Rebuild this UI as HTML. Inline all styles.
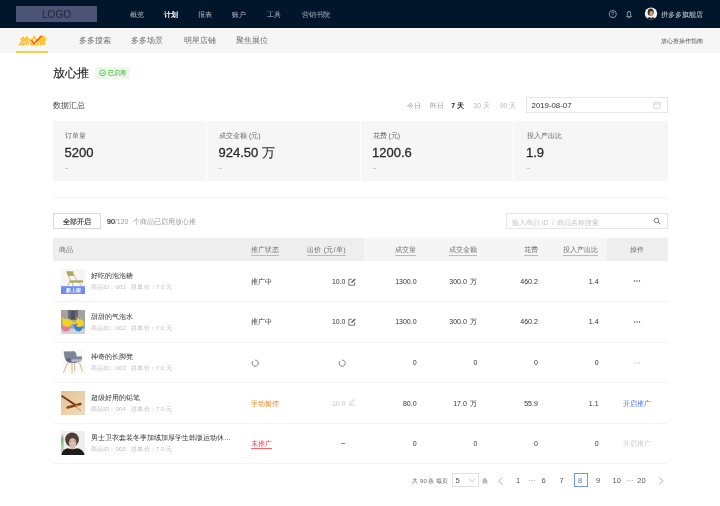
<!DOCTYPE html>
<html><head><meta charset="utf-8">
<style>
*{margin:0;padding:0;box-sizing:border-box}
html,body{width:720px;height:506px;overflow:hidden;background:#fff;font-family:"Liberation Sans",sans-serif;color:#333}
.a{position:absolute;white-space:nowrap;line-height:1}
#top{position:absolute;left:0;top:0;width:720px;height:27.8px;background:#01162b}
#logo{position:absolute;left:16px;top:6px;width:81px;height:16px;background:#4b5573;color:#1a2440;font-size:10px;text-align:center;line-height:18px}
.nav{font-size:7px;color:#b0b5be;top:11px}
#sub{position:absolute;left:0;top:27.8px;width:720px;height:25px;background:#f6f6f6;border-top:1px solid #fbfbfb}
.sn{font-size:7.5px;color:#6e6e6e;top:36.5px}
.t7{font-size:7px}
.g{color:#999}
.big{font-size:13px;color:#2b2b2b;-webkit-text-stroke:0.3px #2b2b2b}
.dash{width:3px;height:0.8px;background:#ccc}
.th{font-size:7px;color:#707070;top:246px}
.u{border-bottom:0.6px solid #bbb;padding-bottom:1.5px}
.pgn{font-size:7.5px;color:#555;top:477px}
</style></head><body><div style="position:absolute;left:0;top:0;width:720px;height:506px;will-change:transform">
<div id="top"></div>
<div id="logo">LOGO</div>
<div class="a nav" style="left:129.5px">概览</div>
<div class="a nav" style="left:164px;color:#fff;font-weight:bold">计划</div>
<div class="a nav" style="left:198px">报表</div>
<div class="a nav" style="left:232px">账户</div>
<div class="a nav" style="left:267px">工具</div>
<div class="a nav" style="left:302px">营销书院</div>
<div class="a nav" style="left:661px;color:#d0d4da">拼多多旗舰店</div>

<div id="sub"></div>
<div class="a sn" style="left:79px">多多搜索</div>
<div class="a sn" style="left:131px">多多场景</div>
<div class="a sn" style="left:184px">明星店铺</div>
<div class="a sn" style="left:236px">聚焦展位</div>
<div class="a" style="left:661px;top:37.5px;font-size:6px;color:#555">放心推操作指南</div>
<div class="a" style="left:16px;top:51px;width:31.5px;height:2px;background:#ffcb45"></div>

<div class="a" style="left:53px;top:67px;font-size:12px;color:#2a2a2a;-webkit-text-stroke:0.18px #2a2a2a">放心推</div>
<div class="a" style="left:95px;top:66.7px;width:35.3px;height:12px;background:#ecf9e7"></div>
<div class="a" style="left:108.3px;top:69.7px;font-size:6px;color:#36b836;-webkit-text-stroke:0.05px #36b836">已启用</div>

<div class="a" style="left:53px;top:101.5px;font-size:8px;color:#444">数据汇总</div>
<div class="a t7 g" style="left:407px;top:101.5px">今日</div>
<div class="a t7 g" style="left:429.7px;top:101.5px">昨日</div>
<div class="a t7" style="left:451.3px;top:101.5px;font-weight:bold;color:#222">7 天</div>
<div class="a t7" style="left:473.3px;top:101.5px;color:#bbb">30 天</div>
<div class="a t7" style="left:499.7px;top:101.5px;color:#bbb">90 天</div>
<div class="a" style="left:526px;top:97.3px;width:141.6px;height:16px;border:0.8px solid #e6e6e6"></div>
<div class="a" style="left:531.6px;top:101.8px;font-size:7.8px;color:#333">2019-08-07</div>

<div class="a" style="left:52.5px;top:121px;width:615px;height:60px;background:#f6f6f6"></div>

<div class="a" style="left:52.5px;top:238px;width:615px;height:22.5px;background:#eee"></div>

<div class="a" style="left:205.5px;top:121px;width:1px;height:60px;background:#fff"></div>
<div class="a" style="left:359.8px;top:121px;width:1px;height:60px;background:#fff"></div>
<div class="a" style="left:513.3px;top:121px;width:1px;height:60px;background:#fff"></div>
<div class="a t7" style="left:65px;top:131.8px;color:#666">订单量</div>
<div class="a t7" style="left:219px;top:131.8px;color:#666">成交金额 (元)</div>
<div class="a t7" style="left:372.5px;top:131.8px;color:#666">花费 (元)</div>
<div class="a t7" style="left:526.5px;top:131.8px;color:#666">投入产出比</div>
<div class="a big" style="left:64.5px;top:146px">5200</div>
<div class="a big" style="left:218.5px;top:146px">924.50 <span style="-webkit-text-stroke:0.1px #2b2b2b">万</span></div>
<div class="a big" style="left:372px;top:146px">1200.6</div>
<div class="a big" style="left:526px;top:146px">1.9</div>
<div class="a dash" style="left:65px;top:168px"></div>
<div class="a dash" style="left:219px;top:168px"></div>
<div class="a dash" style="left:372.5px;top:168px"></div>
<div class="a dash" style="left:526.5px;top:168px"></div>

<div class="a" style="left:52.5px;top:213.2px;width:48.3px;height:16.3px;border:0.8px solid #d9d9d9;background:#fff"></div>
<div class="a t7" style="left:63px;top:218.3px;color:#222;-webkit-text-stroke:0.12px #222">全部开启</div>
<div class="a t7" style="left:107px;top:218.3px;color:#999"><span style="color:#333;-webkit-text-stroke:0.2px #333">90</span>/120<span style="margin-left:4.6px">个商品已启用放心推</span></div>
<div class="a" style="left:505.5px;top:213.3px;width:162px;height:16px;border:0.8px solid #e6e6e6;background:#fff"></div>
<div class="a" style="left:511.7px;top:219px;font-size:7px;color:#c4c4c4">输入商品 ID<span style="margin:0 1.2px 0 1.5px"> / </span>商品名称搜索</div>

<div class="a" style="left:52.5px;top:196.8px;width:615px;height:1px;background:#f3f3f3"></div>
<div class="a" style="left:363.6px;top:238px;width:243.4px;height:22.5px;background:#f5f5f5"></div>
<div class="a th" style="left:58.8px">商品</div>
<div class="a th u" style="left:250.8px">推广状态</div>
<div class="a th u" style="left:307px;letter-spacing:0.28px">出价 (元/单)</div>
<div class="a th u" style="left:395.3px">成交量</div>
<div class="a th u" style="left:449.2px">成交金额</div>
<div class="a th u" style="left:523.8px">花费</div>
<div class="a th u" style="left:563px">投入产出比</div>
<div class="a th" style="left:630px">操作</div>
<div class="a" style="left:52.5px;top:301.20px;width:615px;height:1px;background:#f4f4f4"></div>
<div class="a t7" style="left:91px;top:271.9px;color:#333">好吃的泡泡糖</div>
<div class="a" style="left:91px;top:284.0px;font-size:6px;color:#c0c0c0;letter-spacing:0.12px">商品ID：001&nbsp;&nbsp;&nbsp;拼单价：7.0 元</div>
<div class="a" style="left:52.5px;top:341.66px;width:615px;height:1px;background:#f4f4f4"></div>
<div class="a t7" style="left:91px;top:312.5px;color:#333">甜甜的气泡水</div>
<div class="a" style="left:91px;top:324.6px;font-size:6px;color:#c0c0c0;letter-spacing:0.12px">商品ID：002&nbsp;&nbsp;&nbsp;拼单价：7.0 元</div>
<div class="a" style="left:52.5px;top:382.12px;width:615px;height:1px;background:#f4f4f4"></div>
<div class="a t7" style="left:91px;top:353.1px;color:#333">神奇的长脚凳</div>
<div class="a" style="left:91px;top:365.2px;font-size:6px;color:#c0c0c0;letter-spacing:0.12px">商品ID：003&nbsp;&nbsp;&nbsp;拼单价：7.0 元</div>
<div class="a" style="left:52.5px;top:422.58px;width:615px;height:1px;background:#f4f4f4"></div>
<div class="a t7" style="left:91px;top:393.7px;color:#333">超级好用的铅笔</div>
<div class="a" style="left:91px;top:405.8px;font-size:6px;color:#c0c0c0;letter-spacing:0.12px">商品ID：004&nbsp;&nbsp;&nbsp;拼单价：7.0 元</div>
<div class="a" style="left:52.5px;top:463.04px;width:615px;height:1px;background:#f4f4f4"></div>
<div class="a t7" style="left:91px;top:434.3px;color:#333">男士卫衣套装冬季加绒加厚学生韩版运动休…</div>
<div class="a" style="left:91px;top:446.4px;font-size:6px;color:#c0c0c0;letter-spacing:0.12px">商品ID：005&nbsp;&nbsp;&nbsp;拼单价：7.0 元</div>
<div class="a t7" style="left:251.2px;top:277.8px;color:#333">推广中</div>
<div class="a t7" style="left:225.5px;width:120px;text-align:right;top:277.8px;color:#333">10.0</div>
<div class="a t7" style="left:296.6px;width:120px;text-align:right;top:277.8px;color:#333">1300.0</div>
<div class="a t7" style="left:357.3px;width:120px;text-align:right;top:277.8px;color:#333">300.0<span style="margin-left:1.5px"> 万</span></div>
<div class="a t7" style="left:417.8px;width:120px;text-align:right;top:277.8px;color:#333">460.2</div>
<div class="a t7" style="left:478.6px;width:120px;text-align:right;top:277.8px;color:#333">1.4</div>
<div class="a t7" style="left:251.2px;top:318.4px;color:#333">推广中</div>
<div class="a t7" style="left:225.5px;width:120px;text-align:right;top:318.4px;color:#333">10.0</div>
<div class="a t7" style="left:296.6px;width:120px;text-align:right;top:318.4px;color:#333">1300.0</div>
<div class="a t7" style="left:357.3px;width:120px;text-align:right;top:318.4px;color:#333">300.0<span style="margin-left:1.5px"> 万</span></div>
<div class="a t7" style="left:417.8px;width:120px;text-align:right;top:318.4px;color:#333">460.2</div>
<div class="a t7" style="left:478.6px;width:120px;text-align:right;top:318.4px;color:#333">1.4</div>
<div class="a t7" style="left:296.6px;width:120px;text-align:right;top:359.0px;color:#333">0</div>
<div class="a t7" style="left:357.3px;width:120px;text-align:right;top:359.0px;color:#333">0</div>
<div class="a t7" style="left:417.8px;width:120px;text-align:right;top:359.0px;color:#333">0</div>
<div class="a t7" style="left:478.6px;width:120px;text-align:right;top:359.0px;color:#333">0</div>
<div class="a t7" style="left:251.2px;top:399.6px;color:#f5841f">手动暂停</div>
<div class="a t7" style="left:225.5px;width:120px;text-align:right;top:399.6px;color:#c8c8c8">10.0</div>
<div class="a t7" style="left:296.6px;width:120px;text-align:right;top:399.6px;color:#333">80.0</div>
<div class="a t7" style="left:357.3px;width:120px;text-align:right;top:399.6px;color:#333">17.0<span style="margin-left:1.5px"> 万</span></div>
<div class="a t7" style="left:417.8px;width:120px;text-align:right;top:399.6px;color:#333">55.9</div>
<div class="a t7" style="left:478.6px;width:120px;text-align:right;top:399.6px;color:#333">1.1</div>
<div class="a t7" style="left:251.2px;top:440.2px;color:#f5353b;border-bottom:0.6px solid #f7666a;padding-bottom:0.8px">未推广</div>
<div class="a t7" style="left:296.6px;width:120px;text-align:right;top:440.2px;color:#333">0</div>
<div class="a t7" style="left:357.3px;width:120px;text-align:right;top:440.2px;color:#333">0</div>
<div class="a t7" style="left:417.8px;width:120px;text-align:right;top:440.2px;color:#333">0</div>
<div class="a t7" style="left:478.6px;width:120px;text-align:right;top:440.2px;color:#333">0</div>

<!-- brand logo -->
<div class="a" style="left:19.5px;top:35.8px;font-size:9.4px;font-weight:900;color:#fcc232;transform:skewX(-14deg);letter-spacing:-0.6px;-webkit-text-stroke:0.35px #fcc232">放心推</div>
<svg class="a" style="left:0;top:0" width="720" height="60">
<path d="M31.8 40.6 L33.6 43.6 L41.6 36.1" fill="none" stroke="#f5621e" stroke-width="1.5" stroke-linejoin="round" stroke-linecap="round"/>
<line x1="61.8" y1="36.5" x2="61.8" y2="44" stroke="#e4e4e4" stroke-width="0.6"/>
<!-- question -->
<circle cx="612.75" cy="14.1" r="3.6" fill="none" stroke="#b4b9c2" stroke-width="0.75"/>
<path d="M611.75 13 Q611.75 12 612.75 12 Q613.75 12 613.75 12.9 Q613.75 13.5 613.1 13.8 Q612.75 14 612.75 14.8" fill="none" stroke="#b4b9c2" stroke-width="0.6" stroke-linecap="round"/>
<circle cx="612.75" cy="16.1" r="0.4" fill="#b4b9c2"/>
<!-- bell -->
<path d="M626.5 16.7 L627.3 15.7 L627.3 13.7 Q627.3 11.3 629 11.3 Q630.7 11.3 630.7 13.7 L630.7 15.7 L631.5 16.7 Z" fill="none" stroke="#9aa0aa" stroke-width="0.95" stroke-linejoin="round"/>
<path d="M628.2 17.6 L629.8 17.6" stroke="#b4b9c2" stroke-width="0.8"/>
<!-- avatar -->
<defs><clipPath id="av"><circle cx="651" cy="13.6" r="6.2"/></clipPath></defs>
<g clip-path="url(#av)">
<rect x="644" y="7" width="14" height="14" fill="#f4f3f1"/>
<ellipse cx="650.7" cy="12.2" rx="3" ry="3.6" fill="#3d2e25"/>
<ellipse cx="651.2" cy="13.4" rx="1.8" ry="2.3" fill="#c9a590"/>
<path d="M646 21 Q646.5 17.4 649.5 17.2 L652.5 17.2 Q656 17.4 656.5 21 Z" fill="#1e1e1e"/>
<path d="M650 16.5 L652.3 16.5 L652 18 L650.3 18 Z" fill="#e8d5c8"/>
</g>
</svg>
<!-- badge icon -->
<svg class="a" style="left:95px;top:66px" width="14" height="14">
<circle cx="7.6" cy="6.9" r="2.9" fill="none" stroke="#3dbb3d" stroke-width="0.8"/>
<path d="M6.3 6.9 L7.3 7.9 L9 6" fill="none" stroke="#3dbb3d" stroke-width="0.8"/>
</svg>
<!-- calendar -->
<svg class="a" style="left:650px;top:98px" width="14" height="14">
<rect x="4" y="4.2" width="6.2" height="6.3" rx="0.8" fill="none" stroke="#c8c8c8" stroke-width="0.7"/>
<line x1="4" y1="6" x2="10.2" y2="6" stroke="#c8c8c8" stroke-width="0.7"/>
<circle cx="7.1" cy="8.3" r="0.4" fill="#c8c8c8"/>
</svg>
<!-- search -->
<svg class="a" style="left:650px;top:214px" width="14" height="14">
<circle cx="6.5" cy="6.5" r="2.3" fill="none" stroke="#707070" stroke-width="0.9"/>
<line x1="8.2" y1="8.2" x2="10" y2="10" stroke="#707070" stroke-width="0.9" stroke-linecap="round"/>
</svg>
<div class="a t7" style="left:607px;width:60.5px;text-align:center;top:399.6px;color:#3d6cf5">开启推广</div>
<div class="a t7" style="left:607px;width:60.5px;text-align:center;top:440.2px;color:#c8c8c8">开启推广</div>
<svg class="a" style="left:347px;top:276.5px" width="10" height="10">
<path d="M4.8 2.3 L1.8 2.3 L1.8 8.2 L7.7 8.2 L7.7 5.3" fill="none" stroke="#555" stroke-width="0.8"/>
<path d="M4.2 6 L4.4 4.8 L7.6 1.6 L8.6 2.6 L5.4 5.8 Z" fill="#555"/></svg>
<svg class="a" style="left:347px;top:317.1px" width="10" height="10">
<path d="M4.8 2.3 L1.8 2.3 L1.8 8.2 L7.7 8.2 L7.7 5.3" fill="none" stroke="#555" stroke-width="0.8"/>
<path d="M4.2 6 L4.4 4.8 L7.6 1.6 L8.6 2.6 L5.4 5.8 Z" fill="#555"/></svg>
<svg class="a" style="left:347px;top:398.3px" width="10" height="10">
<path d="M2.4 6.3 L2.6 5.1 L6.3 1.4 L7.4 2.5 L3.7 6.2 Z" fill="none" stroke="#bdbdbd" stroke-width="0.6"/>
<line x1="2" y1="7.1" x2="8.3" y2="7.1" stroke="#bdbdbd" stroke-width="0.65"/></svg>
<svg class="a" style="left:250.2px;top:358px" width="10" height="10">
<path d="M2.9 3.1 A3.1 3.1 0 1 0 5.1 2.1" fill="none" stroke="#707070" stroke-width="0.9"/></svg>
<svg class="a" style="left:337.0px;top:358px" width="10" height="10">
<path d="M2.9 3.1 A3.1 3.1 0 1 0 5.1 2.1" fill="none" stroke="#707070" stroke-width="0.9"/></svg>
<svg class="a" style="left:60.7px;top:268.7px" width="24.4" height="25" viewBox="0 0 24.4 25" font-family="Liberation Sans, sans-serif"><rect width="24.4" height="25" fill="#f6f6f4"/>
<path d="M5.6 2.6 L9.8 12.5 M12.6 5.5 L16.2 12 M9.2 13 L6 17.5 M11.2 13 L12.2 17.5 M18 13 L20.5 17.5" stroke="#dcae7e" stroke-width="0.9" fill="none"/>
<path d="M5.3 2.3 L12.1 2.2 L13 6.8 L7.1 7.1 Z" fill="#a8ab5e"/>
<path d="M8.3 11.4 L21.8 11.3 L22.2 13.4 L8.8 13.8 Z" fill="#a5a85a"/>
<rect x="0" y="17.2" width="24.4" height="7.8" fill="#6c8cf6"/>
<text x="12.2" y="23.3" font-size="5.2" fill="#fff" text-anchor="middle" font-weight="bold">新上架</text></svg>
<svg class="a" style="left:61px;top:310px" width="24" height="24" viewBox="0 0 24 24" font-family="Liberation Sans, sans-serif"><rect width="24" height="24" fill="#a3a3a3"/>
<rect x="7" y="0" width="10" height="10" fill="#6a6a70"/>
<rect x="10" y="1" width="4" height="8" fill="#4a5260"/>
<rect x="0" y="18.5" width="24" height="5.5" fill="#d2d2d2"/>
<path d="M0.6 6.4 L3.8 9.8 L1.5 10.5 Z" fill="#f0d21e"/>
<ellipse cx="4.9" cy="18.2" rx="4" ry="3.3" fill="#e77aa0"/>
<ellipse cx="6.2" cy="12.7" rx="5" ry="4" fill="#f2d420"/>
<path d="M15.4 6.4 L18.3 9.9 L15.8 10.5 Z" fill="#f0d21e"/>
<ellipse cx="17.5" cy="16" rx="4.6" ry="5.4" fill="#2f86d6"/>
<ellipse cx="18.6" cy="13.2" rx="4.5" ry="3.9" fill="#f2d420"/>
<path d="M11 11.5 L14.5 12.5 L14 14 L11 13.5 Z" fill="#f2d420"/>
<circle cx="15.6" cy="14.4" r="0.8" fill="#d83a2a"/></svg>
<svg class="a" style="left:61px;top:350px" width="24" height="24" viewBox="0 0 24 24" font-family="Liberation Sans, sans-serif"><rect width="24" height="24" fill="#fbfbfb"/>
<path d="M6.5 13 L2.5 22.5 M11 13 L11 23.5 M13.5 13 L13.8 21.5 M18.5 13 L21.5 21.5" stroke="#d9a96f" stroke-width="0.9" fill="none"/>
<path d="M2.6 1.5 L13.8 1.3 Q15.8 3.5 15.5 6.5 L20.8 6.3 L20.8 9.5 Q20 12.5 14 13 L8 13 Q4.5 12 3.5 7 Z" fill="#7d8496"/>
<path d="M10 9.5 L20.5 9.2 L20.2 11.5 L11 11.8 Z" fill="#b8bdcc"/>
<path d="M5 8 L10 8.5 L10 11.5 L6 11 Z" fill="#5c6378"/></svg>
<svg class="a" style="left:61px;top:391px" width="24" height="24" viewBox="0 0 24 24" font-family="Liberation Sans, sans-serif"><defs><linearGradient id="pg" x1="0" y1="0" x2="1" y2="1"><stop offset="0" stop-color="#e2c295"/><stop offset="1" stop-color="#f1dcbc"/></linearGradient></defs>
<rect width="24" height="24" fill="url(#pg)"/>
<path d="M1.5 5 L20 20" stroke="#7a7a72" stroke-width="0.7"/>
<path d="M1.2 5.2 L13.5 13.2" stroke="#7a3215" stroke-width="1.7" stroke-linecap="round"/>
<path d="M6.5 16.5 L19.5 13" stroke="#8e4520" stroke-width="2.4" stroke-linecap="round"/>
<circle cx="16" cy="15" r="0.9" fill="#d9b020"/></svg>
<svg class="a" style="left:61px;top:431px" width="24" height="24" viewBox="0 0 24 24" font-family="Liberation Sans, sans-serif"><rect width="24" height="24" fill="#efeded"/>
<path d="M0 3.5 L2.8 4.5 L3 20 L0 21 Z" fill="#b5d3b0"/>
<path d="M0.5 6 L2 7 L1.6 13 L0.5 14 Z" fill="#6fae6a"/>
<ellipse cx="11" cy="8.6" rx="6.9" ry="7.2" fill="#4f3f34"/>
<ellipse cx="11.6" cy="11.8" rx="3.8" ry="4.6" fill="#dcbcae"/>
<path d="M8 10.2 L10.3 10.2 M12.6 10.2 L14.8 10.2" stroke="#7a5a4a" stroke-width="0.6"/>
<path d="M9.5 14.5 L13.8 14.5 L14 18 L9.5 18 Z" fill="#d9b8a8"/>
<path d="M0.3 24 Q1 18.5 7 17.3 Q11.5 19 16 17.3 Q22.5 18.5 23.5 24 Z" fill="#1c1c1c"/></svg>

<div class="a" style="left:412.4px;top:478.3px;font-size:6px;color:#666">共 90 条 每页</div>
<div class="a" style="left:452px;top:473.3px;width:27.2px;height:14.2px;border:0.7px solid #e0e0e0"></div>
<div class="a pgn" style="left:455.6px">5</div>
<svg class="a" style="left:466px;top:476px" width="12" height="10"><path d="M3 2.8 L6 5.8 L9 2.8" fill="none" stroke="#aaa" stroke-width="0.7"/></svg>
<div class="a" style="left:481.5px;top:478.3px;font-size:6px;color:#666">条</div>
<svg class="a" style="left:495px;top:475px" width="12" height="12"><path d="M7.8 2.5 L3.6 6 L7.8 9.5" fill="none" stroke="#999" stroke-width="0.7"/></svg>
<div class="a pgn" style="left:516px">1</div>
<div class="a pgn" style="left:528.5px;top:476.5px;color:#999">···</div>
<div class="a pgn" style="left:541.5px">6</div>
<div class="a pgn" style="left:559.6px">7</div>
<div class="a" style="left:573.5px;top:473.3px;width:14.3px;height:14.2px;border:0.8px solid #7393f6"></div>
<div class="a pgn" style="left:578px;color:#4a72f5">8</div>
<div class="a pgn" style="left:596px">9</div>
<div class="a pgn" style="left:612.5px">10</div>
<div class="a pgn" style="left:626.5px;top:476.5px;color:#999">···</div>
<div class="a pgn" style="left:637.3px">20</div>
<svg class="a" style="left:654.5px;top:475px" width="12" height="12"><path d="M4 2.5 L8.2 6 L4 9.5" fill="none" stroke="#999" stroke-width="0.7"/></svg>
<svg class="a" style="left:630px;top:278.4px" width="14" height="6"><circle cx="4.5" cy="3" r="0.72" fill="#4a4a4a"/><circle cx="7" cy="3" r="0.72" fill="#4a4a4a"/><circle cx="9.5" cy="3" r="0.72" fill="#4a4a4a"/></svg>
<svg class="a" style="left:630px;top:319.0px" width="14" height="6"><circle cx="4.5" cy="3" r="0.72" fill="#4a4a4a"/><circle cx="7" cy="3" r="0.72" fill="#4a4a4a"/><circle cx="9.5" cy="3" r="0.72" fill="#4a4a4a"/></svg>
<svg class="a" style="left:630px;top:359.6px" width="14" height="6"><circle cx="4.5" cy="3" r="0.72" fill="#c8c8c8"/><circle cx="7" cy="3" r="0.72" fill="#c8c8c8"/><circle cx="9.5" cy="3" r="0.72" fill="#c8c8c8"/></svg>
<div class="a" style="left:341.4px;top:443.2px;width:3.8px;height:0.8px;background:#8a8a8a"></div>
</div></body></html>
